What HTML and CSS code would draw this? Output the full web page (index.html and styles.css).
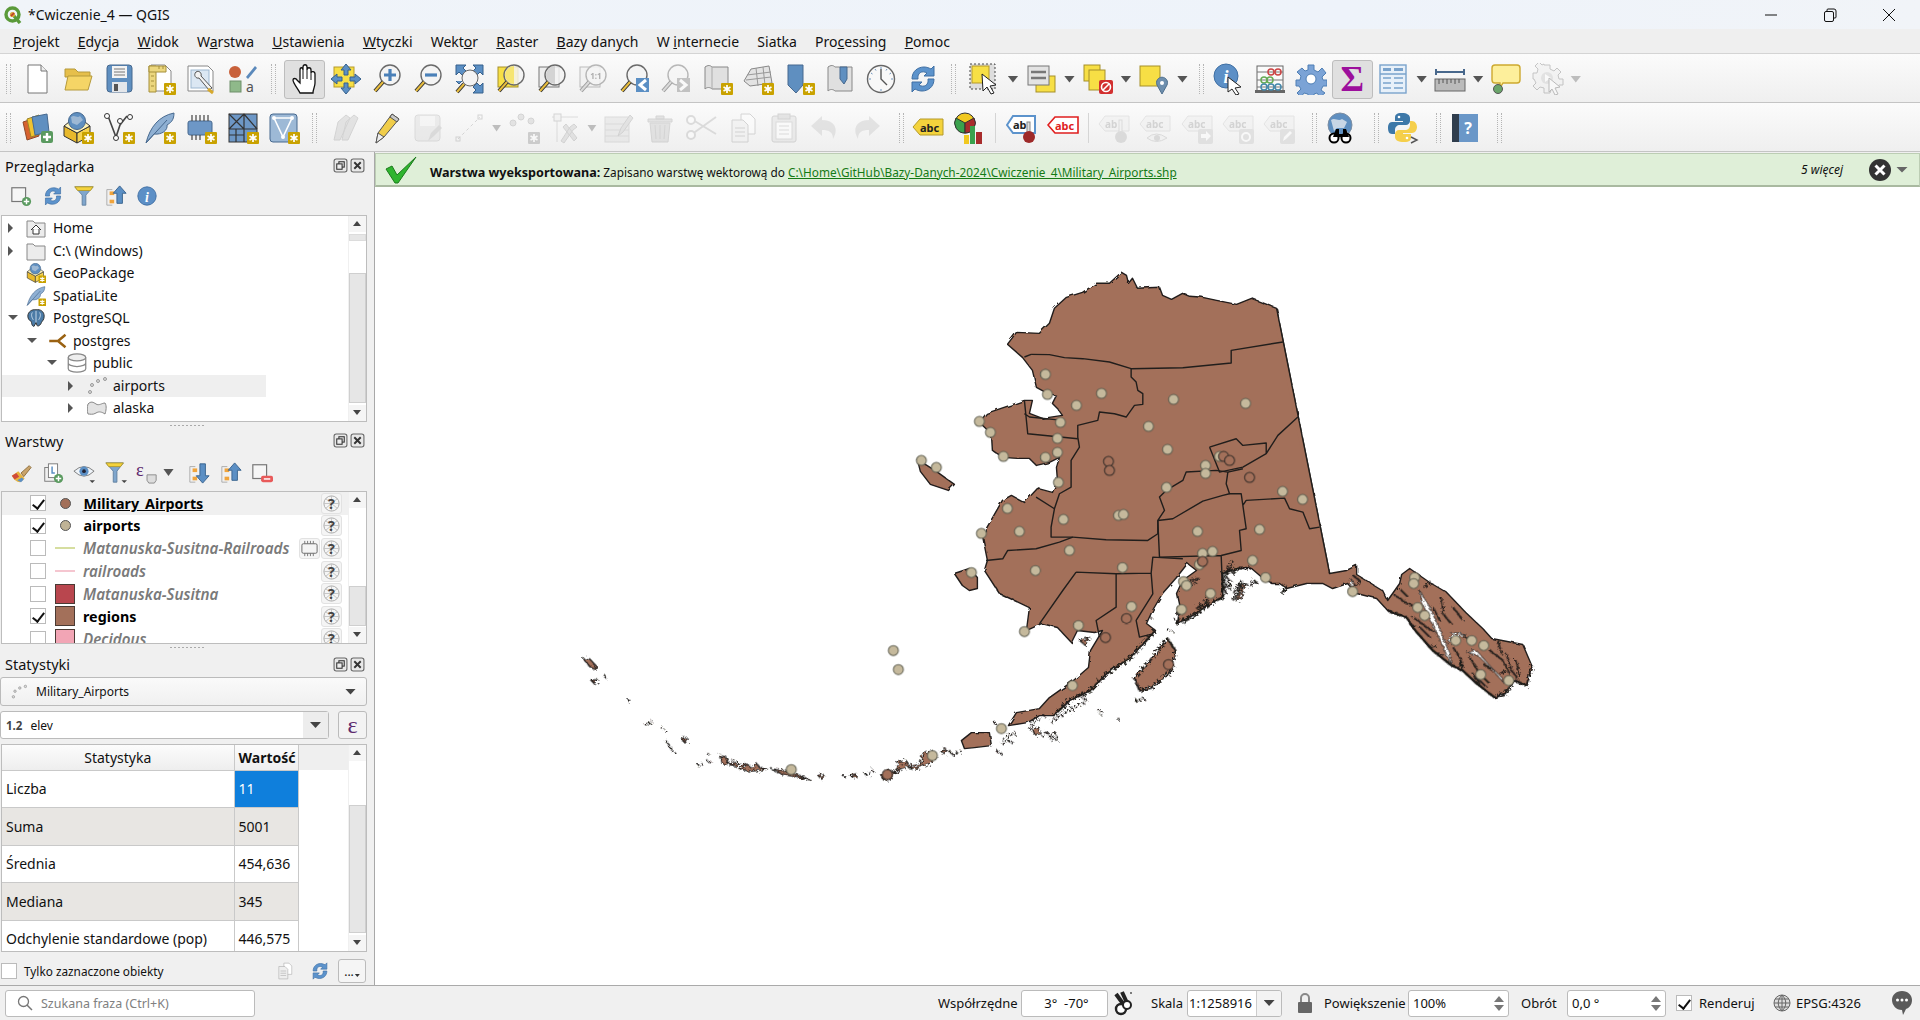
FILE: index.html
```html
<!DOCTYPE html>
<html lang="pl">
<head>
    <meta charset="UTF-8">
    <title>*Cwiczenie_4 — QGIS</title>
    <link rel="stylesheet" href="styles.css">
</head>
<body>
    <svg class="defs" xmlns="http://www.w3.org/2000/svg">
        <!-- shared parts -->
        <g id="star"><rect x="20" y="20" width="12" height="12" rx="1" fill="#c9a200"/><path d="M26 22v8M22.5 24l7 4M22.5 28l7-4" stroke="#fff" stroke-width="1.7"/></g>
        <g id="mag"><circle cx="19" cy="12" r="10" fill="#f3f3f3" fill-opacity=".85" stroke="#6a6a6a" stroke-width="1.4"/><path d="M12 19L4 28" stroke="#333" stroke-width="4"/><path d="M12 19L4 28" stroke="#e8bd3e" stroke-width="2"/></g>

        <!-- toolbar 1 -->
        <symbol id="i-new" viewBox="0 0 32 32"><path d="M7 2h13l6 6v22H7z" fill="#fff" stroke="#777"/><path d="M20 2v6h6" fill="#eee" stroke="#777"/></symbol>
        <symbol id="i-open" viewBox="0 0 32 32"><path d="M3 6h10l3 3h12v5H3z" fill="#e6bf4b" stroke="#b59a3c"/><path d="M3 27l3-14h24l-4 14z" fill="#f5d566" stroke="#b59a3c"/></symbol>
        <symbol id="i-save" viewBox="0 0 32 32"><rect x="4" y="2" width="25" height="27" rx="3" fill="#5f8fc0" stroke="#47698f"/><rect x="9" y="3" width="15" height="12" fill="#f3f3f3"/><path d="M11 6h11M11 9h11M11 12h11" stroke="#777"/><rect x="9" y="19" width="15" height="10" fill="#e3e6ea"/><rect x="11" y="21" width="4" height="7" fill="#555"/></symbol>
        <symbol id="i-layout" viewBox="0 0 32 32"><path d="M7 2h14l6 6v20H7z" fill="#fff" stroke="#888"/><path d="M5 3h7v26H5z" fill="#ecd77e" stroke="#a58f3a"/><path d="M5 3h17v6H5z" fill="#ecd77e" stroke="#a58f3a"/><path d="M7 13h3M7 18h3M7 23h3M15 3v3M19 3v3" stroke="#a58f3a"/><use href="#star"/></symbol>
        <symbol id="i-manager" viewBox="0 0 32 32"><path d="M3 3h20l5 5v20H3z" fill="#fff" stroke="#888"/><rect x="6" y="7" width="18" height="18" fill="#dbe7f3" stroke="#9db7d0"/><path d="M11 9c-3 3 0 7 3 6l10 12 3-2-11-12c1-3-2-6-5-4z" fill="#f2f2f2" stroke="#555"/><path d="M23 26l5 4" stroke="#d6a92e" stroke-width="3"/></symbol>
        <symbol id="i-style" viewBox="0 0 32 32"><circle cx="8" cy="9" r="6" fill="#c8603a"/><path d="M19 14l9-11 2 2-9 11z" fill="#5b89bb"/><rect x="3" y="18" width="11" height="11" fill="#8fb98a" stroke="#6f8f6a"/><text x="19" y="29" class="svg-a">a</text></symbol>
        <symbol id="i-pan" viewBox="0 0 32 32"><path d="M11 30c-2-4-7-10-7-13 0-2 3-2 4 0l3 3V7c0-3 3-3 3 0V4c0-3 4-3 4 0v3c0-3 4-3 4 0v3c0-2 4-2 4 1v9c0 4-2 6-2 10z" fill="#fff" stroke="#111" stroke-width="1.3"/><path d="M14 7v9M18 7v9M22 10v7" stroke="#111"/></symbol>
        <symbol id="i-panmap" viewBox="0 0 32 32"><rect x="4" y="4" width="20" height="20" fill="#f7df45" stroke="#b59a2a"/><path d="M16 1l5 6h-3v5h-4V7h-3zM16 31l5-6h-3v-5h-4v5h-3zM1 16l6-5v3h5v4H7v3zM31 16l-6-5v3h-5v4h5v3z" fill="#5b8fc4" stroke="#36608c"/></symbol>
        <symbol id="i-zoomin" viewBox="0 0 32 32"><use href="#mag"/><path d="M19 6v12M13 12h12" stroke="#4a80b8" stroke-width="3.2"/></symbol>
        <symbol id="i-zoomout" viewBox="0 0 32 32"><use href="#mag"/><path d="M13 12h12" stroke="#4a80b8" stroke-width="3.2"/></symbol>
        <symbol id="i-full" viewBox="0 0 32 32"><path d="M3 2h10l-3 3 3 3-4 4-3-3-3 3zM30 2H20l3 3-3 3 4 4 3-3 3 3zM30 30H20l3-3-3-3 4-4 3 3 3-3zM3 18l3 3 3-3" fill="#5b8fc4" stroke="#36608c"/><circle cx="17" cy="15" r="8" fill="#f3f3f3" fill-opacity=".8" stroke="#666"/><path d="M11 21l-7 8" stroke="#333" stroke-width="4"/><path d="M11 21l-7 8" stroke="#e8bd3e" stroke-width="2"/></symbol>
        <symbol id="i-zsel" viewBox="0 0 32 32"><rect x="3" y="4" width="20" height="20" fill="#f7df45" stroke="#a58f2a"/><use href="#mag"/><path d="M19 3a9 9 0 0 0 0 18z" fill="#f7df45" fill-opacity=".7"/></symbol>
        <symbol id="i-zlayer" viewBox="0 0 32 32"><rect x="3" y="4" width="20" height="20" fill="#eee" stroke="#777"/><use href="#mag"/><path d="M19 3a9 9 0 0 0 0 18z" fill="#ccc" fill-opacity=".8"/></symbol>
        <symbol id="i-z11" viewBox="0 0 32 32"><rect x="3" y="4" width="20" height="20" fill="#eee" stroke="#777"/><use href="#mag"/><text x="19" y="16" class="svg-11">1:1</text></symbol>
        <symbol id="i-zlast" viewBox="0 0 32 32"><use href="#mag"/><rect x="18" y="15" width="13" height="14" fill="#5b8fc4"/><path d="M28 17l-6 5 6 5" fill="none" stroke="#fff" stroke-width="3"/></symbol>
        <symbol id="i-znext" viewBox="0 0 32 32"><use href="#mag"/><rect x="18" y="15" width="13" height="14" fill="#5b8fc4"/><path d="M21 17l6 5-6 5" fill="none" stroke="#fff" stroke-width="3"/></symbol>
        <symbol id="i-mapnew" viewBox="0 0 32 32"><path d="M4 4c3-2 5-2 7 0h16v22H11c-2-2-5-2-7 0z" fill="#e0e0e0" stroke="#888"/><path d="M11 4v22" stroke="#aaa"/><use href="#star"/></symbol>
        <symbol id="i-mapgrid" viewBox="0 0 32 32"><path d="M9 6l18-3 3 17-22 3-6-5z" fill="#e3e3e3" stroke="#888"/><path d="M5 12l24-3M4 17l25-3M14 5l2 18M21 4l2 18" stroke="#999"/><use href="#star"/></symbol>
        <symbol id="i-bookm" viewBox="0 0 32 32"><path d="M5 2h15v20l-7 8-8-8z" fill="#5f8fc0" stroke="#47698f"/><use href="#star"/></symbol>
        <symbol id="i-bookmap" viewBox="0 0 32 32"><path d="M4 4c3-2 5-2 7 0h17v24H11c-2-2-5-2-7 0z" fill="#e0e0e0" stroke="#888"/><path d="M16 4h7v12l-3 5-4-5z" fill="#5f8fc0" stroke="#47698f"/></symbol>
        <symbol id="i-clock" viewBox="0 0 32 32"><circle cx="16" cy="16" r="13.5" fill="#f8f8f8" stroke="#666" stroke-width="1.4"/><path d="M16 6v10l6 6" fill="none" stroke="#555" stroke-width="1.4"/><path d="M16 4v2M16 26v2M4 16h2M26 16h2M10 6l1 1.5M22 6l-1 1.5M6 10l1.5 1M26 10l-1.5 1" stroke="#6d93bd"/></symbol>
        <symbol id="i-refresh" viewBox="0 0 32 32"><path d="M5 16C5 8 11 4 17 4c3 0 5 1 7 2l3-3v10H17l3-3c-5-3-10 0-9 6z" fill="#5c93cc" stroke="#3f6fa3"/><path d="M27 16c0 8-6 12-12 12-3 0-5-1-7-2l-3 3V19h10l-3 3c5 3 10 0 9-6z" fill="#5c93cc" stroke="#3f6fa3"/></symbol>
        <symbol id="i-select" viewBox="0 0 32 32"><rect x="1" y="1" width="25" height="25" fill="#ddd" stroke="#444" stroke-dasharray="2 2"/><rect x="3" y="3" width="17" height="17" fill="#f7df45" stroke="#b59a2a"/><path d="M13 11l14 11-6 1 4 7-3 1-4-7-4 4z" fill="#fff" stroke="#222"/></symbol>
        <symbol id="i-attr" viewBox="0 0 32 32"><rect x="11" y="13" width="19" height="16" fill="#f7df45" stroke="#a58f2a"/><rect x="3" y="3" width="21" height="19" fill="#e3e3e3" stroke="#777"/><path d="M6 9h15M6 15h15" stroke="#777" stroke-width="2.5"/></symbol>
        <symbol id="i-desel" viewBox="0 0 32 32"><rect x="2" y="2" width="16" height="16" fill="#f7df45" stroke="#a58f2a"/><rect x="7" y="7" width="16" height="20" fill="#f7df45" stroke="#a58f2a"/><rect x="17" y="17" width="14" height="14" rx="2" fill="#d22f2f"/><circle cx="24" cy="24" r="4.5" fill="none" stroke="#fff" stroke-width="1.6"/><path d="M21 27l6-6" stroke="#fff" stroke-width="1.6"/></symbol>
        <symbol id="i-loc" viewBox="0 0 32 32"><rect x="2" y="3" width="20" height="20" fill="#f7df45" stroke="#a58f2a"/><path d="M24 31l-5-9a5.5 5.5 0 1 1 10 0z" fill="#6e8fae" stroke="#4e6f8e"/><circle cx="24" cy="20" r="2" fill="#fff"/></symbol>
        <symbol id="i-ident" viewBox="0 0 32 32"><circle cx="13" cy="13" r="12" fill="#5c8fc6" stroke="#3f6fa3"/><text x="13" y="20" class="svg-i">i</text><path d="M15 14l13 10-6 1 4 6-3 1-4-6-4 3z" fill="#fff" stroke="#222"/></symbol>
        <symbol id="i-abacus" viewBox="0 0 32 32"><rect x="3" y="3" width="26" height="25" fill="#fafafa" stroke="#666"/><path d="M3 9h26M3 17h26M3 24h26" stroke="#777"/><rect x="1" y="27" width="30" height="3" fill="#666"/><circle cx="17" cy="9" r="3" fill="none" stroke="#c44" stroke-width="1.5"/><circle cx="24" cy="9" r="3" fill="none" stroke="#c44" stroke-width="1.5"/><circle cx="10" cy="17" r="3" fill="none" stroke="#6a5" stroke-width="1.5"/><circle cx="16" cy="17" r="3" fill="none" stroke="#6a5" stroke-width="1.5"/><circle cx="10" cy="24" r="3" fill="none" stroke="#48a" stroke-width="1.5"/><circle cx="17" cy="24" r="3" fill="none" stroke="#48a" stroke-width="1.5"/><circle cx="24" cy="24" r="3" fill="none" stroke="#48a" stroke-width="1.5"/></symbol>
        <symbol id="i-gear" viewBox="0 0 32 32"><path d="M13 2h6v5l4 2 4-4 4 5-4 4 1 3h4v6h-4l-2 4 4 3-5 4-3-4-3 1v5h-6v-5l-4-1-3 4-4-4 4-4-2-3H1v-6h4l1-4-4-4 5-4 3 3 3-1z" fill="#7ba3d6" stroke="#4f7fb5"/><circle cx="16" cy="16" r="5" fill="#fff" stroke="#4f7fb5"/></symbol>
        <symbol id="i-table" viewBox="0 0 32 32"><rect x="3" y="2" width="26" height="28" fill="#e7f0f9" stroke="#7aa3cc" stroke-width="1.4"/><rect x="6" y="5" width="8" height="3" fill="#7aa3cc"/><rect x="17" y="5" width="9" height="3" fill="#7aa3cc"/><path d="M3 11h26M6 15h8M17 15h9M6 20h8M17 20h9M6 25h8M17 25h9" stroke="#7aa3cc" stroke-width="1.6"/></symbol>
        <symbol id="i-ruler" viewBox="0 0 32 32"><path d="M2 6v6M30 6v6M2 9h28" stroke="#48688c" stroke-width="2"/><rect x="1" y="16" width="30" height="12" fill="#bbb" stroke="#666"/><path d="M5 16v5M9 16v4M13 16v5M17 16v4M21 16v5M25 16v4" stroke="#555"/></symbol>
        <symbol id="i-tip" viewBox="0 0 32 32"><path d="M5 2h22q3 0 3 3v12q0 3-3 3H13l-3 5V20H5q-3 0-3-3V5q0-3 3-3z" fill="#fdef9b" stroke="#cda92f" stroke-width="1.4"/><circle cx="8" cy="26" r="4.5" fill="#6aa56a" stroke="#555"/></symbol>
        <symbol id="i-run" viewBox="0 0 32 32"><path d="M12 2h6v4l4 2 3-3 4 4-3 3 1 4h4v6h-4l-2 3-4-3-3 8h-6v-5l-4-1-3 3-4-4 3-3-2-4H1v-6h4l1-4-3-3 4-4 3 3 2-1z" fill="#eee" stroke="#888"/><circle cx="15" cy="15" r="6" fill="#ccc"/><path d="M13 11l6 4-6 4z" fill="#fff"/><path d="M17 15l11 9-5 1 3 6-3 1-3-6-3 3z" fill="#fff" stroke="#777"/></symbol>

        <!-- toolbar 2 -->
        <symbol id="i-dsm" viewBox="0 0 32 32"><path d="M2 10l12-4 4 18-12 4z" fill="#d7622f" stroke="#8e4a2a"/><path d="M6 7l12-4 4 18-12 4z" fill="#f0c330" stroke="#9a8428"/><path d="M11 5l15-3 2 18-14 3z" fill="#5f8fc0" stroke="#47698f"/><rect x="20" y="19" width="12" height="12" rx="2" fill="#5a9a5f"/><path d="M26 21v8M22 25h8" stroke="#fff" stroke-width="2.4"/></symbol>
        <symbol id="i-geopkg" viewBox="0 0 32 32"><path d="M2 14l13 7v10L2 24z" fill="#e8b92c" stroke="#333"/><path d="M28 14l-13 7v10l13-7z" fill="#f5d24e" stroke="#333"/><path d="M2 14l5-4h16l5 4-13 7z" fill="#fff3b8" stroke="#333"/><circle cx="15" cy="9" r="8.5" fill="#5f8fc0" stroke="#47698f"/><path d="M9 5c4-3 6 2 9-1l3 4-6 5-5-2z" fill="#9db8d4"/><use href="#star"/></symbol>
        <symbol id="i-vnew" viewBox="0 0 32 32"><path d="M5 4l8 21 4-12 7-9" fill="none" stroke="#444" stroke-width="1.6"/><circle cx="4" cy="4" r="2.5" fill="#fff" stroke="#333"/><circle cx="13" cy="26" r="2.5" fill="#fff" stroke="#333"/><circle cx="17" cy="9" r="2.5" fill="#fff" stroke="#333"/><circle cx="27" cy="5" r="2.5" fill="#fff" stroke="#333"/><use href="#star"/></symbol>
        <symbol id="i-feather" viewBox="0 0 32 32"><path d="M2 31C6 15 15 4 30 1c0 8-4 10-7 12 1 5-5 10-13 9z" fill="#8fb0d3" stroke="#47698f"/><path d="M2 31L23 8" stroke="#47698f"/><use href="#star"/></symbol>
        <symbol id="i-chip" viewBox="0 0 32 32"><rect x="3" y="9" width="24" height="14" rx="2" fill="#6d97c6" stroke="#47698f"/><path d="M7 3v6M11 3v6M15 3v6M19 3v6M23 3v6M7 23v5M11 23v5M15 23v5" stroke="#444" stroke-width="1.2"/><use href="#star"/></symbol>
        <symbol id="i-vt" viewBox="0 0 32 32"><rect x="2" y="2" width="28" height="28" fill="#6d97c6" stroke="#333"/><path d="M2 2l15 15M17 2L2 17M17 2v28M2 17h28M17 2l13 15M2 23h15M9 17v13" stroke="#333" stroke-width="1.2"/><use href="#star"/></symbol>
        <symbol id="i-mesh" viewBox="0 0 32 32"><rect x="2" y="2" width="27" height="28" rx="3" fill="#9db9d6" stroke="#47698f"/><path d="M6 6l9 19 9-19z" fill="none" stroke="#fff" stroke-width="1.6"/><circle cx="6" cy="6" r="2" fill="#fff"/><circle cx="24" cy="6" r="2" fill="#fff"/><circle cx="15" cy="25" r="2" fill="#fff"/><use href="#star"/></symbol>
        <symbol id="i-pencils" viewBox="0 0 32 32"><path d="M4 28l4-18 8-7 4 3-10 22zM12 28l4-18 8-7 4 3-10 22z" fill="#ccc" stroke="#aaa"/></symbol>
        <symbol id="i-pencil" viewBox="0 0 32 32"><path d="M5 31l2-10L21 2l7 5-15 18z" fill="#f0cd4a" stroke="#555"/><path d="M21 2l7 5-2 3-7-5z" fill="#c9c9c9" stroke="#555"/><path d="M5 31l2-10 6 4z" fill="#eee" stroke="#555"/></symbol>
        <symbol id="i-saveedit" viewBox="0 0 32 32"><rect x="3" y="3" width="25" height="26" rx="3" fill="#ddd" stroke="#bbb"/><rect x="8" y="4" width="15" height="10" fill="#f3f3f3"/><path d="M16 29l3-8 8-8 3 3-8 8z" fill="#bbb"/></symbol>
        <symbol id="i-digit" viewBox="0 0 32 32"><path d="M5 27L27 5" stroke="#aaa" stroke-dasharray="3 3"/><rect x="3" y="25" width="4" height="4" fill="none" stroke="#aaa"/><rect x="25" y="3" width="4" height="4" fill="none" stroke="#aaa"/></symbol>
        <symbol id="i-points" viewBox="0 0 32 32"><circle cx="5" cy="11" r="3" fill="#ccc" stroke="#aaa"/><circle cx="13" cy="5" r="3" fill="#ccc" stroke="#aaa"/><circle cx="23" cy="9" r="3" fill="#ccc" stroke="#aaa"/><use href="#star"/></symbol>
        <symbol id="i-tools" viewBox="0 0 32 32"><path d="M3 5h26M8 2v28" stroke="#bbb"/><rect x="5" y="2" width="7" height="7" fill="#eee" stroke="#aaa"/><path d="M12 29l9-14 4-3 3 3-4 3-9 13zM17 12l11 14-3 3-11-14z" fill="#ccc" stroke="#aaa"/></symbol>
        <symbol id="i-edittab" viewBox="0 0 32 32"><rect x="2" y="5" width="24" height="25" fill="#ddd" stroke="#bbb"/><path d="M2 12h24M2 18h24M2 24h24" stroke="#bbb"/><path d="M15 24l3-8 9-13 3 3-10 14z" fill="#ccc" stroke="#aaa"/></symbol>
        <symbol id="i-trash" viewBox="0 0 32 32"><path d="M4 7h24v3H4zM12 7V4h8v3zM6 11h20l-2 19H8z" fill="#d5c9c4" stroke="#b9aaa5"/><path d="M11 13l1 14M16 13v14M21 13l-1 14" stroke="#b9aaa5"/></symbol>
        <symbol id="i-cut" viewBox="0 0 32 32"><path d="M3 5l28 17M3 25l28-20" stroke="#bbb" stroke-width="2"/><circle cx="6" cy="8" r="4" fill="#fff" stroke="#bbb" stroke-width="2"/><circle cx="6" cy="23" r="4" fill="#fff" stroke="#bbb" stroke-width="2"/></symbol>
        <symbol id="i-copy" viewBox="0 0 32 32"><path d="M14 2h9l5 5v15H14z" fill="#fff" stroke="#aaa"/><path d="M5 8h11l5 5v17H5z" fill="#eee" stroke="#aaa"/><path d="M8 16h10M8 20h10M8 24h10" stroke="#aaa"/></symbol>
        <symbol id="i-paste" viewBox="0 0 32 32"><rect x="4" y="4" width="24" height="26" rx="2" fill="#ddd" stroke="#aaa"/><rect x="10" y="2" width="12" height="5" fill="#ccc" stroke="#aaa"/><rect x="8" y="10" width="16" height="17" fill="#fff" stroke="#bbb"/><path d="M11 14h10M11 18h10M11 22h10" stroke="#bbb"/></symbol>
        <symbol id="i-undo" viewBox="0 0 32 32"><path d="M13 4L2 14l11 10v-6c7 0 11 2 11 9 6-10 2-19-11-19z" fill="#ccc"/></symbol>
        <symbol id="i-redo" viewBox="0 0 32 32"><path d="M19 4l11 10-11 10v-6c-7 0-11 2-11 9-6-10-2-19 11-19z" fill="#ccc"/></symbol>
        <symbol id="i-abc" viewBox="0 0 32 32"><path d="M1 15l7-8h23v16H8z" fill="#f4d33c" stroke="#b59a2a"/><text x="8" y="20" class="svg-abc">abc</text></symbol>
        <symbol id="i-diagram" viewBox="0 0 32 32"><circle cx="12" cy="11" r="10" fill="#f1c81f" stroke="#333"/><path d="M12 11L3 6a10 10 0 0 0 9 15z" fill="#3aa14d" stroke="#333"/><path d="M12 11l9-5a10 10 0 0 1-9 15z" fill="#a82c2c" stroke="#333"/><rect x="11" y="23" width="5" height="9" fill="#f1c81f"/><rect x="17" y="14" width="5" height="18" fill="#3aa14d"/><rect x="23" y="20" width="6" height="12" fill="#a82c2c"/></symbol>
        <symbol id="i-abpin" viewBox="0 0 32 32"><path d="M1 13l6-9h22v17H7z" fill="#fff" stroke="#5c93cc" stroke-width="2"/><text x="7" y="17" class="svg-abd">ab</text><rect x="21" y="10" width="3" height="12" fill="#ddd" stroke="#888"/><circle cx="23" cy="25" r="6" fill="#9e2a2a"/></symbol>
        <symbol id="i-abcred" viewBox="0 0 32 32"><path d="M1 13l7-8h23v16H8z" fill="#fff" stroke="#e01f1f" stroke-width="1.6"/><text x="8" y="18" class="svg-abr">abc</text></symbol>
        <symbol id="i-abo1" viewBox="0 0 32 32"><path d="M1 12l6-8h24v15H7z" fill="#eee" stroke="#ccc"/><text x="7" y="16" class="svg-abo">ab</text><rect x="21" y="8" width="3" height="14" fill="#eee" stroke="#bbb"/><circle cx="23" cy="25" r="6" fill="#c5bdb8"/></symbol>
        <symbol id="i-abo2" viewBox="0 0 32 32"><path d="M1 12l6-8h24v15H7z" fill="#eee" stroke="#ccc"/><text x="7" y="16" class="svg-abo">abc</text><path d="M8 26q9-8 20 0-11 7-20 0z" fill="#eee" stroke="#bbb"/><circle cx="18" cy="26" r="3" fill="#bbb"/></symbol>
        <symbol id="i-abo3" viewBox="0 0 32 32"><path d="M1 12l6-8h24v15H7z" fill="#eee" stroke="#ccc"/><text x="7" y="16" class="svg-abo">abc</text><rect x="17" y="17" width="15" height="15" rx="2" fill="#d0cbc6"/><path d="M20 22h5v-3l5 5-5 5v-3h-5z" fill="#fff"/></symbol>
        <symbol id="i-abo4" viewBox="0 0 32 32"><path d="M1 12l6-8h24v15H7z" fill="#eee" stroke="#ccc"/><text x="7" y="16" class="svg-abo">abc</text><rect x="17" y="17" width="15" height="15" rx="2" fill="#d0cbc6"/><circle cx="24" cy="25" r="4" fill="none" stroke="#fff" stroke-width="2"/></symbol>
        <symbol id="i-abo5" viewBox="0 0 32 32"><path d="M1 12l6-8h24v15H7z" fill="#eee" stroke="#ccc"/><text x="7" y="16" class="svg-abo">abc</text><rect x="17" y="17" width="15" height="15" rx="2" fill="#d0cbc6"/><path d="M20 29l1-4 6-6 2 2-6 6z" fill="#fff"/></symbol>
        <symbol id="i-search" viewBox="0 0 32 32"><circle cx="15" cy="13" r="12" fill="#5f8fc0" stroke="#7b8ea3"/><path d="M6 8c4-3 7 2 11-1l5 3-3 6-7 0-3 3zM18 20l4-1 2 3-4 1z" fill="#c8d6e5"/><circle cx="9" cy="26" r="4.5" fill="#fff" stroke="#000" stroke-width="2"/><circle cx="21" cy="26" r="4.5" fill="#fff" stroke="#000" stroke-width="2"/><path d="M8 25l3-8h3v5h4v-5h3l3 8" fill="#000"/></symbol>
        <symbol id="i-python" viewBox="0 0 32 32"><path d="M15 1c-6 0-7 2-7 5v3h8v1H5c-3 0-4 3-4 6s1 6 4 6h3v-4c0-3 2-5 5-5h6c2 0 4-2 4-4V6c0-3-3-5-8-5z" fill="#3d78a8"/><path d="M17 30c6 0 7-2 7-5v-3h-8v-1h9c3 0 5-3 5-6s-2-6-5-6h-2v4c0 3-2 5-5 5h-6c-2 0-4 2-4 4v3c0 3 3 5 9 5z" fill="#f5cf4b"/><circle cx="12" cy="5" r="1.3" fill="#fff"/><circle cx="20" cy="26" r="1.3" fill="#fff"/><path d="M24 25l6 3-6 3" fill="none" stroke="#555" stroke-width="1.4"/></symbol>
        <symbol id="i-help" viewBox="0 0 32 32"><rect x="3" y="2" width="26" height="28" fill="#6a97c8"/><rect x="3" y="2" width="7" height="28" fill="#2f3d4d"/><text x="19" y="22" class="svg-q">?</text></symbol>

        <!-- panel buttons -->
        <symbol id="p-add" viewBox="0 0 24 24"><rect x="2" y="3" width="15" height="15" fill="#f6f6f6" stroke="#777" stroke-width="1.3"/><circle cx="18" cy="18" r="5" fill="#5a9a5f"/><path d="M18 15v6M15 18h6" stroke="#fff" stroke-width="1.6"/></symbol>
        <symbol id="p-filter" viewBox="0 0 24 24"><path d="M2 2h20l-8 9v11h-4V11z" fill="#7fa6cd" stroke="#5f7f9f"/><path d="M2 2h20l-3 4H5z" fill="#f4d33c" stroke="#b59a2a"/></symbol>
        <symbol id="p-collapse" viewBox="0 0 24 24"><path d="M2 5h6M2 5v17h6" stroke="#aaa" fill="none"/><rect x="5" y="7" width="5" height="4" fill="#f0a43c"/><rect x="5" y="16" width="5" height="4" fill="#f0a43c"/><path d="M16 1l7 8h-4v11h-6V9H9z" fill="#5b8fc4" stroke="#36608c"/></symbol>
        <symbol id="p-expand" viewBox="0 0 24 24"><path d="M2 5h6M2 5v17h6" stroke="#aaa" fill="none"/><rect x="5" y="7" width="5" height="4" fill="#f0a43c"/><rect x="5" y="16" width="5" height="4" fill="#f0a43c"/><path d="M16 23l7-8h-4V2h-6v13H9z" fill="#5b8fc4" stroke="#36608c"/></symbol>
        <symbol id="p-info" viewBox="0 0 24 24"><circle cx="12" cy="12" r="10" fill="#5c8fc6" stroke="#3f6fa3"/><text x="12" y="18" class="svg-pi">i</text></symbol>
        <symbol id="p-brush" viewBox="0 0 24 24"><path d="M2 15l7-5 7 8-5 4c-4 0-7-3-9-7z" fill="#e8b33c"/><path d="M2 15l5-3 3 4-5 3z" fill="#d04a3a"/><path d="M8 20l5-3 2 2-3 3z" fill="#5b8fc4"/><path d="M12 12l9-8 2 2-8 10z" fill="#c9a36a" stroke="#8c6c3a"/></symbol>
        <symbol id="p-group" viewBox="0 0 24 24"><rect x="3" y="6" width="12" height="15" fill="#f0f0f0" stroke="#777"/><rect x="7" y="2" width="10" height="15" fill="#fff" stroke="#777"/><path d="M11 5v7h3" fill="none" stroke="#5b8fc4" stroke-width="1.6"/><circle cx="18" cy="18" r="5" fill="#5a9a5f"/><path d="M18 15v6M15 18h6" stroke="#fff" stroke-width="1.6"/></symbol>
        <symbol id="p-eye" viewBox="0 0 24 24"><path d="M1 10q11-10 22 0-11 11-22 0z" fill="#eef3f8" stroke="#777"/><circle cx="12" cy="10" r="5" fill="#5b8fc4"/><circle cx="12" cy="10" r="2" fill="#223"/><path d="M18 20h6l-3 3z" fill="#444"/></symbol>
        <symbol id="p-filter2" viewBox="0 0 24 24"><path d="M1 1h19l-7 9v12h-4V10z" fill="#7fa6cd" stroke="#5f7f9f"/><path d="M1 1h19l-3 4H4z" fill="#f4d33c" stroke="#b59a2a"/><path d="M18 20h6l-3 3z" fill="#444"/></symbol>
        <symbol id="p-eps" viewBox="0 0 24 24"><text x="0" y="15" class="svg-eps">ε</text><path d="M12 14h10v6l-2 3h-6l-2-3z" fill="#ddd" stroke="#888"/></symbol>
        <symbol id="p-remove" viewBox="0 0 24 24"><rect x="2" y="3" width="15" height="15" fill="#f6f6f6" stroke="#777" stroke-width="1.3"/><rect x="11" y="15" width="13" height="7" rx="2" fill="#e85a5a"/><path d="M14 18.5h7" stroke="#fff" stroke-width="1.6"/></symbol>
        <symbol id="p-help" viewBox="0 0 20 20"><circle cx="10" cy="10" r="8" fill="none" stroke="#aaa"/><path d="M2 10h16M10 2v16M4 5l12 10M16 5L4 15" stroke="#c4c4c4"/><text x="10" y="16" class="svg-help">?</text></symbol>
        <symbol id="p-mem" viewBox="0 0 20 20"><rect x="2" y="5" width="16" height="10" rx="1.5" fill="#f4f4f4" stroke="#666"/><path d="M5 2v3M8 2v3M11 2v3M14 2v3M5 15v3M8 15v3M11 15v3M14 15v3" stroke="#777"/></symbol>
        <symbol id="p-float" viewBox="0 0 14 14"><rect x="1" y="1" width="12" height="12" rx="2" fill="#e8e8e8" stroke="#666"/><rect x="5.5" y="3.5" width="5" height="5" fill="none" stroke="#333"/><rect x="3.5" y="5.5" width="5" height="5" fill="#eee" stroke="#333"/></symbol>
        <symbol id="p-close" viewBox="0 0 14 14"><rect x="1" y="1" width="12" height="12" rx="2" fill="#e8e8e8" stroke="#666"/><path d="M4 4l6 6M10 4l-6 6" stroke="#333" stroke-width="1.8"/></symbol>
        <symbol id="s-tracker" viewBox="0 0 20 26"><path d="M3 4l8 11M9 2l6 13" stroke="#222" stroke-width="4"/><circle cx="8" cy="19" r="5" fill="#fff" stroke="#222" stroke-width="2.4"/><circle cx="14" cy="15" r="4" fill="#fff" stroke="#222" stroke-width="2"/><circle cx="18" cy="3" r="1" fill="#555"/></symbol>
        <symbol id="s-lock" viewBox="0 0 16 22"><path d="M4 10V6a4 4 0 0 1 8 0v4" fill="none" stroke="#888" stroke-width="2"/><rect x="1" y="10" width="14" height="11" rx="1" fill="#666"/></symbol>
        <symbol id="s-globe" viewBox="0 0 18 18"><circle cx="9" cy="9" r="8" fill="#ddd" stroke="#666"/><path d="M1 9h16M2 5h14M2 13h14M9 1v16M9 1c-5 5-5 11 0 16M9 1c5 5 5 11 0 16" stroke="#666" fill="none"/></symbol>
        <symbol id="s-msg" viewBox="0 0 22 26"><path d="M11 1c6 0 10 4 10 9s-3 8-6 9l-3 6-1-5C5 20 1 15 1 10s4-9 10-9z" fill="#5a5a5a"/><circle cx="6.5" cy="10" r="1.5" fill="#fff"/><circle cx="11" cy="10" r="1.5" fill="#fff"/><circle cx="15.5" cy="10" r="1.5" fill="#fff"/></symbol>
        <symbol id="t-home" viewBox="0 0 20 20"><path d="M1 3h6l2 2h10v14H1z" fill="#ececec" stroke="#888"/><path d="M5 12l5-5 5 5M7 11v5h6v-5" fill="#fff" stroke="#333"/></symbol>
        <symbol id="t-folder" viewBox="0 0 20 20"><path d="M1 3h6l2 2h10v14H1z" fill="#ececec" stroke="#888"/></symbol>
        <symbol id="t-pg" viewBox="0 0 22 22"><path d="M2 9c0-5 5-8 9-7 5-1 9 2 9 7 0 4-2 5-3 7-1 3-4 5-5 3l-1-3-2 4c-2 1-3-3-3-5-2-1-4-3-4-6z" fill="#4b7ba6" stroke="#2a2a2a"/><path d="M11 3v13M7 5c-2 3 0 6 1 8M15 5c2 3 0 6-1 8" stroke="#cfe0ee" fill="none"/></symbol>
        <symbol id="t-conn" viewBox="0 0 16 12"><path d="M1 6h7M14 1L8 6l6 5" fill="none" stroke="#9a6212" stroke-width="2"/></symbol>
        <symbol id="t-db" viewBox="0 0 16 16"><ellipse cx="8" cy="3.5" rx="7" ry="2.8" fill="#eee" stroke="#888"/><path d="M1 3.5v9c0 1.5 3 2.8 7 2.8s7-1.3 7-2.8v-9M1 8c0 1.5 3 2.8 7 2.8s7-1.3 7-2.8" fill="none" stroke="#888"/></symbol>
        <symbol id="t-pts" viewBox="0 0 20 20"><circle cx="3" cy="16" r="1.5" fill="#ddd" stroke="#999"/><circle cx="5" cy="9" r="1.5" fill="#ddd" stroke="#999"/><circle cx="11" cy="5" r="1.5" fill="#ddd" stroke="#999"/><circle cx="18" cy="3" r="1.5" fill="#ddd" stroke="#999"/></symbol>
        <symbol id="t-poly" viewBox="0 0 20 14"><path d="M1 3c3-3 5-2 8 0s6-1 9-1c2 3 1 8 0 11-3-2-6-3-9-1s-6 1-8 1c-1-3-1-7 0-10z" fill="#e3e3e3" stroke="#888"/></symbol>
        <symbol id="qlogo" viewBox="0 0 18 18"><circle cx="8.5" cy="8.5" r="6.5" fill="none" stroke="#5a9a3a" stroke-width="3.4"/><path d="M10 10l6 7" stroke="#5a9a3a" stroke-width="3.4"/><circle cx="8.5" cy="8.5" r="2.6" fill="#d8a23a"/><path d="M7 10l3-3" stroke="#c0392b" stroke-width="1.6"/></symbol>
    </svg>

    <header class="titlebar">
        <svg class="qlogo"><use href="#qlogo"/></svg>
        <span class="title-text">*Cwiczenie_4 — QGIS</span>
        <div class="winbtns">
            <span class="winbtn"><svg width="14" height="14"><path d="M1 7h12" stroke="#111"/></svg></span>
            <span class="winbtn"><svg width="14" height="14"><path d="M4 3V2q0-1 1-1h6q2 0 2 2v6q0 1-1 1h-1" fill="none" stroke="#111"/><rect x="1.5" y="3.5" width="9" height="10" rx="1.5" fill="none" stroke="#111"/></svg></span>
            <span class="winbtn"><svg width="14" height="14"><path d="M1 1l12 12M13 1L1 13" stroke="#111"/></svg></span>
        </div>
    </header>

    <nav class="menubar">
        <span><u>P</u>rojekt</span><span><u>E</u>dycja</span><span><u>W</u>idok</span><span>W<u>a</u>rstwa</span><span><u>U</u>stawienia</span><span><u>W</u>tyczki</span><span>Wekt<u>o</u>r</span><span><u>R</u>aster</span><span><u>B</u>azy danych</span><span>W <u>i</u>nternecie</span><span>Siatka</span><span>Pro<u>c</u>essing</span><span><u>P</u>omoc</span>
    </nav>

    <div class="toolbar">
        <i class="grip g-first"></i>
        <span class="tb"><svg class="ic"><use href="#i-new"/></svg></span>
        <span class="tb"><svg class="ic"><use href="#i-open"/></svg></span>
        <span class="tb"><svg class="ic"><use href="#i-save"/></svg></span>
        <span class="tb"><svg class="ic"><use href="#i-layout"/></svg></span>
        <span class="tb"><svg class="ic"><use href="#i-manager"/></svg></span>
        <span class="tb"><svg class="ic"><use href="#i-style"/></svg></span>
        <i class="grip g-nav"></i>
        <span class="tb active"><svg class="ic"><use href="#i-pan"/></svg></span>
        <span class="tb"><svg class="ic"><use href="#i-panmap"/></svg></span>
        <span class="tb"><svg class="ic"><use href="#i-zoomin"/></svg></span>
        <span class="tb"><svg class="ic"><use href="#i-zoomout"/></svg></span>
        <span class="tb"><svg class="ic"><use href="#i-full"/></svg></span>
        <span class="tb"><svg class="ic"><use href="#i-zsel"/></svg></span>
        <span class="tb"><svg class="ic"><use href="#i-zlayer"/></svg></span>
        <span class="tb off"><svg class="ic"><use href="#i-z11"/></svg></span>
        <span class="tb"><svg class="ic"><use href="#i-zlast"/></svg></span>
        <span class="tb off"><svg class="ic"><use href="#i-znext"/></svg></span>
        <span class="tb"><svg class="ic"><use href="#i-mapnew"/></svg></span>
        <span class="tb"><svg class="ic"><use href="#i-mapgrid"/></svg></span>
        <span class="tb"><svg class="ic"><use href="#i-bookm"/></svg></span>
        <span class="tb"><svg class="ic"><use href="#i-bookmap"/></svg></span>
        <span class="tb"><svg class="ic"><use href="#i-clock"/></svg></span>
        <span class="tb"><svg class="ic"><use href="#i-refresh"/></svg></span>
        <i class="grip g-nav"></i>
        <span class="tb"><svg class="ic"><use href="#i-select"/></svg></span><b class="dd"></b>
        <span class="tb"><svg class="ic"><use href="#i-attr"/></svg></span><b class="dd"></b>
        <span class="tb"><svg class="ic"><use href="#i-desel"/></svg></span><b class="dd"></b>
        <span class="tb"><svg class="ic"><use href="#i-loc"/></svg></span><b class="dd"></b>
        <i class="grip g-id"></i>
        <span class="tb"><svg class="ic"><use href="#i-ident"/></svg></span>
        <span class="tb"><svg class="ic"><use href="#i-abacus"/></svg></span>
        <span class="tb"><svg class="ic"><use href="#i-gear"/></svg></span>
        <span class="tb active"><span class="sigma">Σ</span></span>
        <span class="tb"><svg class="ic"><use href="#i-table"/></svg></span><b class="dd"></b>
        <span class="tb"><svg class="ic"><use href="#i-ruler"/></svg></span><b class="dd"></b>
        <span class="tb"><svg class="ic"><use href="#i-tip"/></svg></span>
        <span class="tb off"><svg class="ic"><use href="#i-run"/></svg></span><b class="dd dd-off"></b>
    </div>

    <div class="toolbar">
        <i class="grip g-first"></i>
        <span class="tb"><svg class="ic"><use href="#i-dsm"/></svg></span>
        <span class="tb"><svg class="ic"><use href="#i-geopkg"/></svg></span>
        <span class="tb"><svg class="ic"><use href="#i-vnew"/></svg></span>
        <span class="tb"><svg class="ic"><use href="#i-feather"/></svg></span>
        <span class="tb"><svg class="ic"><use href="#i-chip"/></svg></span>
        <span class="tb"><svg class="ic"><use href="#i-vt"/></svg></span>
        <span class="tb"><svg class="ic"><use href="#i-mesh"/></svg></span>
        <i class="grip g-edit"></i>
        <span class="tb off"><svg class="ic"><use href="#i-pencils"/></svg></span>
        <span class="tb"><svg class="ic"><use href="#i-pencil"/></svg></span>
        <span class="tb off"><svg class="ic"><use href="#i-saveedit"/></svg></span>
        <span class="tb off"><svg class="ic"><use href="#i-digit"/></svg></span><b class="dd dd-narrow dd-off"></b>
        <span class="tb off"><svg class="ic"><use href="#i-points"/></svg></span>
        <span class="tb off"><svg class="ic"><use href="#i-tools"/></svg></span><b class="dd dd-narrow dd-off"></b>
        <span class="tb off"><svg class="ic"><use href="#i-edittab"/></svg></span>
        <span class="tb off"><svg class="ic"><use href="#i-trash"/></svg></span>
        <span class="tb off"><svg class="ic"><use href="#i-cut"/></svg></span>
        <span class="tb off"><svg class="ic"><use href="#i-copy"/></svg></span>
        <span class="tb off"><svg class="ic"><use href="#i-paste"/></svg></span>
        <span class="tb off"><svg class="ic"><use href="#i-undo"/></svg></span>
        <span class="tb off"><svg class="ic"><use href="#i-redo"/></svg></span>
        <i class="grip g-label"></i>
        <span class="tb"><svg class="ic"><use href="#i-abc"/></svg></span>
        <span class="tb"><svg class="ic"><use href="#i-diagram"/></svg></span>
        <i class="vsep vsep-a"></i>
        <span class="tb"><svg class="ic"><use href="#i-abpin"/></svg></span>
        <span class="tb"><svg class="ic"><use href="#i-abcred"/></svg></span>
        <i class="vsep vsep-b"></i>
        <span class="tb off"><svg class="ic"><use href="#i-abo1"/></svg></span>
        <span class="tb off"><svg class="ic"><use href="#i-abo2"/></svg></span>
        <span class="tb off"><svg class="ic"><use href="#i-abo3"/></svg></span>
        <span class="tb off"><svg class="ic"><use href="#i-abo4"/></svg></span>
        <span class="tb off"><svg class="ic"><use href="#i-abo5"/></svg></span>
        <i class="grip g-small"></i>
        <span class="tb"><svg class="ic"><use href="#i-search"/></svg></span>
        <i class="grip g-small"></i>
        <span class="tb"><svg class="ic"><use href="#i-python"/></svg></span>
        <i class="grip g-small"></i>
        <span class="tb"><svg class="ic"><use href="#i-help"/></svg></span>
        <i class="grip g-small"></i>
    </div>

    <div class="main">
        <aside class="dock">
            <!-- Browser panel -->
            <section class="panel panel-browser">
                <div class="panel-head">
                    <span>Przeglądarka</span>
                    <svg class="pbtn"><use href="#p-float"/></svg><svg class="pbtn"><use href="#p-close"/></svg>
                </div>
                <div class="panel-tools">
                    <svg class="pic"><use href="#p-add"/></svg>
                    <svg class="pic"><use href="#i-refresh"/></svg>
                    <svg class="pic"><use href="#p-filter"/></svg>
                    <svg class="pic"><use href="#p-collapse"/></svg>
                    <svg class="pic"><use href="#p-info"/></svg>
                </div>
                <div class="box tree-box">
                    <div class="tree">
                        <div class="row"><i class="arr-r l0"></i><svg class="t-ic l0i"><use href="#t-home"/></svg><span>Home</span></div>
                        <div class="row"><i class="arr-r l0"></i><svg class="t-ic l0i"><use href="#t-folder"/></svg><span>C:\ (Windows)</span></div>
                        <div class="row"><svg class="t-ic l0i"><use href="#i-geopkg"/></svg><span>GeoPackage</span></div>
                        <div class="row"><svg class="t-ic l0i"><use href="#i-feather"/></svg><span>SpatiaLite</span></div>
                        <div class="row"><i class="arr-d l0"></i><svg class="t-ic l0i"><use href="#t-pg"/></svg><span>PostgreSQL</span></div>
                        <div class="row"><i class="arr-d l1"></i><svg class="t-ic l1i"><use href="#t-conn"/></svg><span>postgres</span></div>
                        <div class="row"><i class="arr-d l2"></i><svg class="t-ic l2i"><use href="#t-db"/></svg><span>public</span></div>
                        <div class="row selected"><i class="arr-r l3"></i><svg class="t-ic l3i"><use href="#t-pts"/></svg><span>airports</span></div>
                        <div class="row"><i class="arr-r l3"></i><svg class="t-ic l3i"><use href="#t-poly"/></svg><span>alaska</span></div>
                    </div>
                    <div class="sb sb-browser"><b class="sb-up"></b><i class="sb-nub"></i><i class="thumb"></i><b class="sb-down"></b></div>
                </div>
                <div class="handle"></div>
            </section>

            <!-- Layers panel -->
            <section class="panel panel-layers">
                <div class="panel-head">
                    <span>Warstwy</span>
                    <svg class="pbtn"><use href="#p-float"/></svg><svg class="pbtn"><use href="#p-close"/></svg>
                </div>
                <div class="panel-tools tools-layers">
                    <svg class="pic"><use href="#p-brush"/></svg>
                    <svg class="pic"><use href="#p-group"/></svg>
                    <svg class="pic"><use href="#p-eye"/></svg>
                    <svg class="pic"><use href="#p-filter2"/></svg>
                    <svg class="pic"><use href="#p-eps"/></svg><b class="dd dd-panel"></b>
                    <svg class="pic"><use href="#p-expand"/></svg>
                    <svg class="pic"><use href="#p-collapse"/></svg>
                    <svg class="pic"><use href="#p-remove"/></svg>
                </div>
                <div class="box layers-box">
                    <div class="layers">
                        <div class="lrow current"><i class="ck on"></i><i class="sym dot brown"></i><span class="lname on active-layer">Military_Airports</span><svg class="hbtn"><use href="#p-help"/></svg></div>
                        <div class="lrow"><i class="ck on"></i><i class="sym dot tan"></i><span class="lname on">airports</span><svg class="hbtn"><use href="#p-help"/></svg></div>
                        <div class="lrow"><i class="ck"></i><i class="sym ln green"></i><span class="lname">Matanuska-Susitna-Railroads</span><svg class="hbtn mem"><use href="#p-mem"/></svg><svg class="hbtn after-mem"><use href="#p-help"/></svg></div>
                        <div class="lrow"><i class="ck"></i><i class="sym ln pink"></i><span class="lname">railroads</span><svg class="hbtn"><use href="#p-help"/></svg></div>
                        <div class="lrow"><i class="ck"></i><i class="sym sq red"></i><span class="lname">Matanuska-Susitna</span><svg class="hbtn"><use href="#p-help"/></svg></div>
                        <div class="lrow"><i class="ck on"></i><i class="sym sq brownsq"></i><span class="lname on">regions</span><svg class="hbtn"><use href="#p-help"/></svg></div>
                        <div class="lrow"><i class="ck"></i><i class="sym sq pinksq"></i><span class="lname">Decidous</span><svg class="hbtn"><use href="#p-help"/></svg></div>
                    </div>
                    <div class="sb sb-layers"><b class="sb-up"></b><i class="thumb"></i><b class="sb-down"></b></div>
                </div>
                <div class="handle"></div>
            </section>

            <!-- Statistics panel -->
            <section class="panel panel-stats">
                <div class="panel-head">
                    <span>Statystyki</span>
                    <svg class="pbtn"><use href="#p-float"/></svg><svg class="pbtn"><use href="#p-close"/></svg>
                </div>
                <div class="combo combo-layer">
                    <svg class="c-ic"><use href="#t-pts"/></svg><span>Military_Airports</span><b class="dd dd-combo"></b>
                </div>
                <div class="field-row">
                    <div class="combo combo-field">
                        <span class="num-tag">1.2</span><span>elev</span><span class="combo-arrow"><b class="dd dd-combo"></b></span>
                    </div>
                    <span class="eps-btn">ε</span>
                </div>
                <div class="box stats-box">
                    <div class="stats-wrap">
                        <table class="stats">
                            <tr><th class="col-a">Statystyka</th><th class="col-b">Wartość</th></tr>
                            <tr><td>Liczba</td><td class="picked">11</td></tr>
                            <tr class="alt"><td>Suma</td><td>5001</td></tr>
                            <tr><td>Średnia</td><td>454,636</td></tr>
                            <tr class="alt"><td>Mediana</td><td>345</td></tr>
                            <tr><td>Odchylenie standardowe (pop)</td><td>446,575</td></tr>
                        </table>
                    </div>
                    <div class="sb sb-stats"><b class="sb-up"></b><i class="thumb"></i><b class="sb-down"></b></div>
                </div>
                <div class="selected-row">
                    <i class="ck ck-stats"></i><span class="sel-label">Tylko zaznaczone obiekty</span>
                    <svg class="pic copy-ic"><use href="#i-copy"/></svg>
                    <svg class="pic refresh-ic"><use href="#i-refresh"/></svg>
                    <span class="more-btn">...<b class="dd dd-more"></b></span>
                </div>
            </section>
        </aside>

        <main class="canvas">
            <div class="msgbar">
                <svg class="msg-ok" viewBox="0 0 32 28"><path d="M1 13l6-3 5 9L31 1 13 27h-3z" fill="#2fb52f" stroke="#1c7a1c"/></svg>
                <span class="msg-text"><b>Warstwa wyeksportowana:</b> Zapisano warstwę wektorową do <a href="#">C:\Home\GitHub\Bazy-Danych-2024\Cwiczenie_4\Military_Airports.shp</a></span>
                <em class="msg-more">5 więcej</em>
                <svg class="msg-close" viewBox="0 0 22 22"><circle cx="11" cy="11" r="11" fill="#333"/><path d="M6.5 6.5l9 9M15.5 6.5l-9 9" stroke="#fff" stroke-width="3"/></svg>
                <b class="dd dd-msg"></b>
            </div>

            <svg class="map" viewBox="376 187 1544 797">
                <defs>
                    <filter id="soft" x="-5%" y="-5%" width="110%" height="110%">
                        <feTurbulence type="fractalNoise" baseFrequency=".12" numOctaves="2" seed="4"/>
                        <feDisplacementMap in="SourceGraphic" scale="3"/>
                    </filter>
                    <filter id="rough" x="-5%" y="-5%" width="110%" height="110%">
                        <feTurbulence type="fractalNoise" baseFrequency=".35" numOctaves="2" seed="9"/>
                        <feDisplacementMap in="SourceGraphic" scale="7"/>
                    </filter>
                </defs>

                <!-- mainland with the panhandle, in page pixels -->
                <g filter="url(#soft)">
                    <path class="land" d="M1008 344L1017 332 1040 333 1050 323 1055 308 1067 297 1083 292 1097 283 1110 283 1122 272 1127 275 1129 283 1133 278 1138 288 1160 287 1163 295 1172 299 1183 293 1190 296 1203 297 1217 300 1237 304 1252 298 1277 308 1330 573 1347 570 1357 565 1357 574 1383 590 1388 600 1400 583 1402 574 1410 568 1430 582 1447 592 1467 613 1483 628 1492 638 1523 644 1532 665 1527 685 1515 680 1505 693 1495 697 1477 683 1463 670 1452 665 1433 650 1413 627 1407 617 1388 610 1377 598 1357 593 1348 583 1333 588 1323 583 1307 583 1287 588 1280 583 1272 583 1266 580 1252 568 1237 568 1223 573 1223 597 1210 603 1197 613 1177 623 1180 607 1177 593 1183 580 1197 570 1188 563 1177 577 1163 593 1153 610 1147 623 1156 630 1131 657 1107 673 1091 690 1070 700 1054 715 1040 715 1028 722 1009 725 1017 712 1040 708 1050 697 1074 680 1089 667 1091 650 1103 630 1095 632 1078 630 1072 642 1058 627 1042 623 1027 630 1030 607 1000 593 985 570 988 560 983 535 1003 500 1012 495 1025 502 1038 488 1053 492 1058 480 1057 467 1060 457 1050 462 1037 465 1030 458 1018 458 1003 457 993 450 992 433 980 422 987 413 1025 400 1033 400 1030 413 1043 418 1063 415 1058 408 1053 403 1057 395 1048 393 1037 387 1033 370 1023 357z"/>
                    <!-- islands that stay smooth -->
                    <path class="land" d="M955 573L970 568 978 577 978 588 970 590 963 585zM918 459L937 471 955 484 949 490 931 484 921 471zM962 740L972 732 990 732 992 745 975 747 965 748z"/>
                </g>
                <!-- straight eastern border -->
                <path class="east-clear" d="M1279.5 300L1333 570"/>
                <path class="east-fill" d="M1275 310L1328 572"/>
                <path class="border" d="M1277 308L1330 573"/>

                <!-- region borders, coordinates of the 3x crop -->
                <g transform="translate(950 260) scale(.3333)">
                    <path class="border" d="M245 282L300 283 345 292 400 295 480 305 545 325 700 322 845 308 845 270 1000 245"/>
                    <path class="border" d="M245 282L225 290M545 325L545 350 560 365 565 390 580 400 580 432 555 435 530 470 495 460 450 455 445 480 385 495 385 530 390 560 365 600 365 680 330 700 315 745 305 800 305 830 370 830 470 838 595 840 625 820 625 780 645 750 630 710 650 690 700 660 710 635 800 630 835 635 830 670 840 700 820 705 760 722 670 775 625 780"/>
                    <path class="border" d="M225 420L235 520 385 535M225 460L240 470 340 480M315 745L260 710"/>
                    <path class="border" d="M780 560L860 535 880 555 950 548 950 580 880 620 810 635 780 560 M950 580L985 525 1045 470 M835 635L880 625"/>
                    <path class="border" d="M840 700L875 700 885 770 890 805 870 810 875 870 815 885 630 890 625 780M880 735L890 720 1005 713 1020 745 1060 755 1080 805 1110 800M815 885L820 1010"/>
                    <path class="border" d="M110 900L160 895 175 870 260 865 330 845 370 830M380 935L500 940 605 938 610 890 700 895M380 935L340 990 270 1090M500 940L500 1040 440 1080 450 1130M605 938L610 1000 560 1080 570 1130 610 1120"/>
                </g>

                <!-- rough shores: fjords, skerries and the smaller islands -->
                <g filter="url(#rough)">
                    <path class="land" d="M1135 677L1148 663 1168 638 1176 650 1172 670 1152 687 1140 690zM1190 580L1199 578 1192 586zM1080 640L1090 637 1085 644zM1236 600l7-15 4-2-7 15z"/>
                    <path class="shore" d="M1388 610L1407 617 1413 627 1433 650 1452 665 1463 670 1477 683 1495 697 1505 693 1515 680 1527 685 1532 665M1223 573L1223 597 1210 603 1197 613 1177 623 1180 607M1156 630L1131 657 1107 673 1091 690 1070 700 1054 715M1135 677L1148 663 1168 638 1176 650 1172 670 1152 687 1140 690zM1252 568L1237 568 1223 573"/>

                    <g transform="translate(950 260) scale(.3333)">
                        <path class="jag" d="M820 940l8 30-6 12 10 20M835 915l-6 32 8 10 5 30M860 990l18-26-8 4-18 30M900 975l22-10-10-6M1000 1000l8-20-8 8M760 1020l14-6-10 22 14-12M740 1045l16-12-8 24M700 1085l20-10"/>
                    </g>
                    <g transform="translate(1200 420) scale(.3333)">
                        <path class="gap" d="M660 510L690 560 720 625 750 700 755 735 735 690 700 615 668 550zM755 640L800 640 775 650 745 670zM800 695L830 690 870 735 905 770 915 790 880 750 835 705zM455 475L465 500 450 495z"/>
                        <path class="jag" d="M585 525l15 8 15 12 25 10M600 505l12 12 13 13M640 590l20 14 20 16 25 15M630 610l20 10M660 620l15 15 15 15M680 670l15 15 15 15 25 5M690 680l20-5M725 530l3 25 2 25 25 30M760 560l15 20 15 20M700 560l10 20 10 20M790 650l20 5 20 5M760 680l10 15 10 15 10 30M810 710l15 25 15 25 30 30M830 770l15 15 15 15M870 690l20 15 20 15 20 40M920 700l8 25 7 25 20 25M950 720l5 25 5 25M895 660l5 20 5 20M670 500l25-15M460 465l20 15-15 20M850 730l30 20M780 720l8 30M820 760l25 40M900 760l20-10"/>
                        <path class="jag" d="M245 520l15-25M100 420l-12 30M115 440l-20 20M75 510l20-30M130 490l-30 50"/>
                    </g>
                    <g transform="translate(560 600) scale(.408 .3333)">
                        <path class="land" d="M60 175L75 175 90 195 90 205 75 198zM78 238L95 238 85 248zM890 460L915 452 925 470 905 490 870 505 855 500 885 490zM790 525L805 508 820 515 830 500 830 485 850 480 855 495 835 505 820 520 810 535 795 538zM520 505L550 510 580 520 615 538 585 530 545 520zM440 505L455 490 470 500 485 490 490 500 510 505 470 512zM395 465L410 470 415 490 400 490zM410 490L440 485 435 497zM940 445L950 448 945 458 935 455zM635 525L645 520 650 528 640 532zM716 522L728 520 726 530 716 530zM303 412L313 412 313 423 303 423zM1160 385L1175 380 1178 400 1165 403z"/>
                        <path class="speck" d="M110 224l6 10M172 298v8M210 372l12-4 8-8M250 380l5 6M262 390v6M262 420l8 16 12 22M365 458v6M340 498l12-8M360 478l12 8M425 478l4 2M695 528l8-5M750 522l10 0 8-16M955 450l8 10 18-4 8-6M1070 365l-4 6M1070 450l15 10M1085 430l15-25 20-8M1100 420l12 8M1185 410l10-18 8 20 12-14 6 18-18 4M1205 365l20-18 40-28 30-25M1280 290l10 5M1285 310l3 3M1325 325v15M1370 352v8M1490 90h12M1450 50v4M1410 300l28-6M1150 385l15-25 25-15"/>
                    </g>
                </g>

                <!-- airports layer -->
                <g class="airports">
                    <circle cx="1046" cy="374"/><circle cx="1048" cy="394"/><circle cx="1077" cy="405"/><circle cx="1102" cy="393"/><circle cx="1061" cy="422"/><circle cx="1058" cy="438"/><circle cx="1058" cy="452"/><circle cx="1046" cy="457"/><circle cx="1004" cy="456"/><circle cx="991" cy="432"/><circle cx="980" cy="421"/><circle cx="1059" cy="482"/><circle cx="1008" cy="508"/><circle cx="1064" cy="519"/><circle cx="1119" cy="515"/><circle cx="1124" cy="514"/><circle cx="1149" cy="426"/><circle cx="1174" cy="399"/><circle cx="1246" cy="403"/><circle cx="1168" cy="449"/><circle cx="1206" cy="465"/><circle cx="1206" cy="473"/><circle cx="1167" cy="487"/><circle cx="1220" cy="456"/><circle cx="1198" cy="531"/><circle cx="1203" cy="553"/><circle cx="1213" cy="551"/><circle cx="1200" cy="564"/><circle cx="1253" cy="560"/><circle cx="1266" cy="577"/><circle cx="1260" cy="529"/><circle cx="1283" cy="491"/><circle cx="1303" cy="499"/><circle cx="982" cy="533"/><circle cx="1020" cy="531"/><circle cx="1070" cy="550"/><circle cx="1036" cy="570"/><circle cx="1123" cy="567"/><circle cx="972" cy="572"/><circle cx="1184" cy="581"/><circle cx="1187" cy="585"/><circle cx="1211" cy="593"/><circle cx="1182" cy="609"/><circle cx="1132" cy="606"/><circle cx="1079" cy="625"/><circle cx="1025" cy="631"/>
                    <circle cx="1353" cy="591"/><circle cx="1415" cy="577"/><circle cx="1414" cy="583"/><circle cx="1418" cy="607"/><circle cx="1425" cy="615"/><circle cx="1456" cy="640"/><circle cx="1472" cy="640"/><circle cx="1484" cy="645"/><circle cx="1481" cy="674"/><circle cx="1509" cy="680"/>
                    <circle cx="894" cy="650"/><circle cx="899" cy="669"/><circle cx="1073" cy="685"/><circle cx="1002" cy="728"/><circle cx="933" cy="755"/><circle cx="792" cy="769"/><circle cx="922" cy="460"/><circle cx="937" cy="467"/>
                </g>
                <!-- Military_Airports layer -->
                <g class="military">
                    <circle cx="1109" cy="461"/><circle cx="1110" cy="470"/><circle cx="1224" cy="456"/><circle cx="1230" cy="460"/><circle cx="1250" cy="477"/><circle cx="1203" cy="561"/><circle cx="1127" cy="618"/><circle cx="1106" cy="637"/><circle cx="1169" cy="664"/><circle cx="888" cy="774"/>
                </g>
            </svg>
        </main>
    </div>

    <footer class="statusbar">
        <div class="searchbox">
            <svg class="search-ic" viewBox="0 0 16 16"><circle cx="6.5" cy="6.5" r="5" fill="none" stroke="#777" stroke-width="1.3"/><path d="M10 10l5 5" stroke="#777" stroke-width="1.5"/></svg>
            <span>Szukana fraza (Ctrl+K)</span>
        </div>
        <span class="st st-coordl">Współrzędne</span>
        <span class="st-input st-coord">3°&nbsp; -70°</span>
        <svg class="st-ic st-track"><use href="#s-tracker"/></svg>
        <span class="st st-scalel">Skala</span>
        <span class="st-input st-scale"><span class="scale-val">1:1258916</span><span class="scale-dd"><b class="dd dd-combo"></b></span></span>
        <svg class="st-ic st-lock"><use href="#s-lock"/></svg>
        <span class="st st-magl">Powiększenie</span>
        <span class="st-input st-mag">100%<span class="spin"><b></b><b></b></span></span>
        <span class="st st-rotl">Obrót</span>
        <span class="st-input st-rot">0,0 °<span class="spin"><b></b><b></b></span></span>
        <i class="ck on st-ck"></i>
        <span class="st st-render">Renderuj</span>
        <svg class="st-ic st-globe"><use href="#s-globe"/></svg>
        <span class="st st-epsg">EPSG:4326</span>
        <svg class="st-ic st-msg"><use href="#s-msg"/></svg>
    </footer>
</body>
</html>
```

FILE: styles.css
```css
* {
    margin: 0;
    padding: 0;
    box-sizing: border-box;
}

html, body {
    height: 100%;
    overflow: hidden;
}

body {
    display: flex;
    flex-direction: column;
    background: #f0f0f0;
    color: #111;
    font-family: "Noto Sans", "Open Sans", sans-serif;
    font-size: 13.5px;
}

.defs {
    display: none;
}

i, b.dd {
    display: block;
    flex: none;
}

/* title and menu */
.titlebar {
    display: flex;
    align-items: center;
    height: 29px;
    background: linear-gradient(90deg, #f0f4f9, #eef3fa 70%, #f1f4f8);
    flex: none;
}

.qlogo {
    width: 18px;
    height: 18px;
    margin-left: 4px;
}

.title-text {
    margin-left: 6px;
    font-size: 14px;
}

.winbtns {
    display: flex;
    margin-left: auto;
    margin-right: 2px;
}

.winbtn {
    display: flex;
    align-items: center;
    justify-content: center;
    width: 59px;
}

.menubar {
    display: flex;
    align-items: center;
    gap: 18.2px;
    height: 25px;
    padding-left: 13px;
    background: #efefef;
    border-bottom: 1px solid #d4d4d4;
    font-size: 14px;
    flex: none;
}

/* toolbars */
.toolbar {
    display: flex;
    align-items: center;
    height: 49px;
    padding-top: 2px;
    background: linear-gradient(#fbfbfb, #efefef);
    border-bottom: 1px solid #c4c4c4;
    flex: none;
}

.tb {
    display: flex;
    align-items: center;
    justify-content: center;
    width: 41.2px;
    height: 39px;
    flex: none;
}

.tb.active {
    background: #e0e0e0;
    border: 1px solid #bdbdbd;
    border-radius: 3px;
}

.off {
    opacity: .45;
    filter: grayscale(1);
}

.ic {
    width: 32px;
    height: 32px;
}

.sigma {
    font-family: "Liberation Serif", serif;
    font-size: 36px;
    line-height: 1;
    color: #9c0f9c;
    font-weight: bold;
}

.grip {
    height: 30px;
    width: 5px;
    border-left: 1px dotted #b5b5b5;
    border-right: 1px dotted #b5b5b5;
}

.g-first { margin: 0 5px 0 6px; }
.g-nav { margin: 0 8px 0 8px; }
.g-id { margin: 0 4px 0 9px; }
.g-edit { margin: 0 8px 0 8px; }
.g-label { margin: 0 3px 0 12.5px; }
.g-small { margin: 0 3.8px 0 12px; }

.vsep {
    width: 1px;
    height: 30px;
    background: #d5d5d5;
}

.vsep-a { margin: 0 5.5px; }
.vsep-b { margin: 0 4.3px; }

.dd {
    width: 15.3px;
    height: 7px;
    background: #555;
    clip-path: polygon(14% 0, 86% 0, 50% 100%);
}

.dd-off { opacity: .35; }
.dd-narrow { width: 13px; }
.dd-panel { width: 14px; margin: 0 3px 0 -6px; }
.dd-combo { width: 11px; height: 6px; background: #444; clip-path: polygon(0 0, 100% 0, 50% 100%); }
.dd-msg { width: 12px; height: 6px; margin-left: 5px; background: #666; clip-path: polygon(0 0, 100% 0, 50% 100%); }
.dd-more { width: 5px; height: 3px; margin-left: 1px; margin-bottom: 1px; background: #333; clip-path: polygon(0 0, 100% 0, 50% 100%); }

/* main area */
.main {
    display: flex;
    flex: 1;
    min-height: 0;
}

.dock {
    display: flex;
    flex-direction: column;
    width: 375px;
    flex: none;
    border-right: 1px solid #a8a8a8;
}

.panel-browser { height: 275px; }
.panel-layers { height: 225px; }
.panel-stats { flex: 1; }

.panel-head {
    display: flex;
    align-items: center;
    gap: 2px;
    height: 27px;
    padding: 0 9px 0 5px;
    font-size: 14.5px;
}

.panel-head span {
    margin-right: auto;
}

.panel-stats .panel-head {
    height: 26px;
}

.pbtn {
    width: 15px;
    height: 15px;
}

.panel-tools {
    display: flex;
    align-items: center;
    gap: 9.5px;
    height: 34px;
    padding: 0 0 0 10px;
}

.tools-layers {
    height: 37px;
}

.pic {
    width: 22px;
    height: 22px;
    flex: none;
}

.box {
    display: flex;
    width: 366px;
    margin-left: 1px;
    background: #fff;
    border: 1px solid #bdbdbd;
    overflow: hidden;
}

.tree-box {
    height: 207px;
    margin-top: 2px;
}

.handle {
    height: 6px;
    background: radial-gradient(circle, #aaa 0.6px, transparent 1px) center / 4px 3px repeat-x;
    background-size: 4px 3px;
    margin: 0 170px;
}

/* browser tree */
.tree {
    flex: 1;
    padding-top: 1px;
    overflow: hidden;
    font-size: 14px;
}

.row {
    position: relative;
    height: 22.5px;
    line-height: 22.5px;
}

.row.selected {
    width: 264px;
    background: #efefef;
}

.row span {
    position: absolute;
    left: 51px;
}

.row:nth-child(6) span { left: 71px; }
.row:nth-child(7) span { left: 91px; }
.row:nth-child(8) span,
.row:nth-child(9) span { left: 111px; }

.arr-r, .arr-d {
    position: absolute;
    top: 6px;
    width: 0;
    height: 0;
}

.arr-r {
    border-left: 5px solid #555;
    border-top: 5px solid transparent;
    border-bottom: 5px solid transparent;
}

.arr-d {
    top: 8px;
    border-top: 5px solid #555;
    border-left: 5px solid transparent;
    border-right: 5px solid transparent;
}

.l0 { left: 6px; }
.l1 { left: 25px; }
.l2 { left: 45px; }
.l3 { left: 66px; }

.t-ic {
    position: absolute;
    top: 1px;
    width: 20px;
    height: 20px;
}

.l0i { left: 24px; }
.l1i { left: 46px; }
.l2i { left: 65px; }
.l3i { left: 85px; }

/* scrollbars */
.sb {
    display: flex;
    flex-direction: column;
    width: 18px;
    height: 100%;
    flex: none;
    background: #fff;
    border-left: 1px solid #f0f0f0;
}

.sb-up, .sb-down {
    position: relative;
    display: block;
    height: 16px;
    flex: none;
    background: #f5f5f5;
}

.sb-up::after, .sb-down::after {
    content: "";
    position: absolute;
    left: 4px;
    top: 5px;
    border-left: 4.5px solid transparent;
    border-right: 4.5px solid transparent;
}

.sb-up::after { border-bottom: 5px solid #444; }
.sb-down::after { border-top: 5px solid #444; }

.sb .thumb {
    flex: none;
    background: #e6e6e6;
    border: 1px solid #cfcfcf;
}

.sb-browser .sb-nub { height: 7px; margin-top: 2px; background: #e6e6e6; border: 1px solid #dcdcdc; }
.sb-browser .thumb { height: 130px; margin-top: 32px; margin-bottom: 2px; }
.sb-layers .thumb { height: 40px; margin-top: 78px; }
.sb-layers .sb-down { margin-top: auto; }
.sb-stats .thumb { height: 128px; margin-top: 44px; }
.sb-stats .sb-down { margin-top: auto; }

/* layer tree */
.layers-box {
    height: 153px;
}

.layers {
    flex: 1;
    overflow: hidden;
    font-size: 15.2px;
}

.lrow {
    display: flex;
    align-items: center;
    height: 22.6px;
    padding-left: 28px;
    flex: none;
}

.lrow.current {
    background: #f0f0f0;
}

.ck {
    width: 16px;
    height: 16px;
    background: #fff;
    border: 1px solid #bbb;
    position: relative;
}

.ck.on::after {
    content: "";
    position: absolute;
    left: 4px;
    top: 1px;
    width: 5px;
    height: 10px;
    border: solid #111;
    border-width: 0 2px 2px 0;
    transform: rotate(38deg);
}

.sym {
    width: 20px;
    margin: 0 8px 0 9px;
    flex: none;
}

.dot {
    width: 11px;
    height: 11px;
    margin: 0 13px 0 13.5px;
    border-radius: 50%;
    border: 1px solid #555;
}

.brown { background: #a3705a; }
.tan { background: #bfb396; }

.ln {
    height: 2px;
}

.green { background: #d6dea0; }
.pink { background: #f5c6d0; }

.sq {
    height: 20px;
    border: 1px solid #4a3a34;
}

.red { background: #b9464e; }
.brownsq { background: #a3705a; }
.pinksq { background: #f2a5b5; }

.lname {
    color: #7a7a7a;
    font-style: italic;
    font-weight: 600;
    white-space: nowrap;
}

.lname.on {
    color: #000;
    font-size: 14.3px;
    font-style: normal;
    font-weight: 700;
}

.active-layer {
    text-decoration: underline;
}

.hbtn {
    width: 21px;
    height: 21px;
    margin-left: auto;
    margin-right: 6px;
    flex: none;
    background: #f5f5f5;
    border: 1px solid #e2e2e2;
    border-radius: 3px;
}

.hbtn.after-mem {
    margin-left: 1px;
}

.hbtn.mem {
    margin-right: 0;
}

/* statistics */
.combo {
    display: flex;
    align-items: center;
    background: linear-gradient(#fafafa, #f0f0f0);
    border: 1px solid #bbb;
    border-radius: 3px;
    font-size: 12px;
}

.combo-layer {
    width: 367px;
    height: 29px;
    margin-left: 0;
    padding: 0 10px;
}

.combo-layer .dd {
    margin-left: auto;
}

.c-ic {
    width: 16px;
    height: 16px;
    margin-right: 9px;
}

.field-row {
    display: flex;
    align-items: stretch;
    height: 28px;
    margin-top: 5px;
}

.combo-field {
    width: 329px;
    padding-left: 5px;
    background: #fff;
}

.num-tag {
    margin-right: 8px;
    font-size: 11.5px;
    font-weight: 700;
    color: #444;
}

.combo-arrow {
    display: flex;
    align-items: center;
    justify-content: center;
    width: 25px;
    height: 100%;
    margin-left: auto;
    background: #ededed;
}

.eps-btn {
    display: flex;
    align-items: center;
    justify-content: center;
    width: 29px;
    margin-left: 9px;
    background: #f3f3f3;
    border: 1px solid #bbb;
    border-radius: 3px;
    font-family: "Liberation Serif", serif;
    font-size: 24px;
    color: #5d2a6e;
}

.stats-box {
    height: 208px;
    margin-top: 5px;
}

.stats-wrap {
    flex: 1;
    overflow: hidden;
    background: linear-gradient(#efefef 25px, #fff 25px);
}

.stats {
    width: 296px;
    table-layout: fixed;
    border-collapse: collapse;
    font-size: 14px;
}

.stats th {
    height: 25px;
    padding: 0;
    font-weight: 400;
    background: linear-gradient(#fcfcfc, #eee);
    border-bottom: 1px solid #c9c9c9;
    border-right: 1px solid #c9c9c9;
}

.col-a { width: 232px; }
.col-b { width: 64px; }

.stats th.col-b {
    font-weight: 700;
    text-align: left;
    padding-left: 4px;
}

.stats td {
    height: 37.5px;
    padding-left: 4px;
    background: #fff;
    border-right: 1px solid #c9c9c9;
    border-bottom: 1px solid #c9c9c9;
    white-space: nowrap;
    overflow: hidden;
}

.stats .alt td {
    background: #e8e6e3;
}

.stats td.picked {
    background: #0f7fdc;
    color: #fff;
}

.selected-row {
    display: flex;
    align-items: center;
    height: 33px;
    padding-top: 5px;
    font-size: 11.8px;
}

.ck-stats {
    margin-left: 1px;
}

.sel-label {
    margin-left: 7px;
    margin-right: auto;
}

.copy-ic {
    width: 18px;
    height: 18px;
    margin-right: 16px;
}

.refresh-ic {
    width: 20px;
    height: 20px;
    margin-right: 8px;
}

.more-btn {
    display: flex;
    align-items: flex-end;
    justify-content: center;
    width: 28px;
    height: 24px;
    margin-right: 8px;
    padding-bottom: 4px;
    background: #f5f5f5;
    border: 1px solid #bbb;
    border-radius: 3px;
    font-size: 12px;
    line-height: 1;
}

/* map side */
.canvas {
    display: flex;
    flex-direction: column;
    flex: 1;
    min-width: 0;
    background: #fff;
    padding-top: 1px;
    background-clip: content-box;
}

.msgbar {
    display: flex;
    align-items: center;
    height: 34px;
    flex: none;
    padding: 0 11px 0 9px;
    background: #dfefd8;
    border: 1px solid #bccdb4;
    border-bottom: 2px solid #a9b9a0;
    font-size: 11.8px;
}

.msg-ok {
    width: 32px;
    height: 28px;
    margin-right: 13px;
}

.msg-text {
    margin-top: 5px;
}

.msg-text b {
    font-size: 12.6px;
}

.msg-text a {
    color: #157a15;
}

.msg-more {
    margin-left: auto;
    margin-right: 26px;
    font-size: 12px;
}

.msg-close {
    width: 22px;
    height: 22px;
}

.map {
    display: block;
    flex: 1;
    min-height: 0;
    width: 100%;
}

.land {
    fill: #a3705a;
    stroke: #211e1c;
    stroke-width: 1.4px;
    stroke-linejoin: round;
    vector-effect: non-scaling-stroke;
}

.border {
    fill: none;
    stroke: #211e1c;
    stroke-width: 1.4px;
    stroke-linejoin: round;
    vector-effect: non-scaling-stroke;
}

.east-clear {
    stroke: #fff;
    stroke-width: 4px;
}

.east-fill {
    stroke: #a3705a;
    stroke-width: 4px;
}

.shore {
    fill: none;
    stroke: #1f1c1a;
    stroke-width: 2.2px;
    stroke-linejoin: round;
}

.jag {
    fill: none;
    stroke: #1f1c1a;
    stroke-width: 1.8px;
    stroke-linejoin: round;
    vector-effect: non-scaling-stroke;
}

.speck {
    fill: none;
    stroke: #1f1c1a;
    stroke-width: 2.2px;
    stroke-dasharray: 2.5 1.5;
    vector-effect: non-scaling-stroke;
}

.gap {
    fill: #fff;
    stroke: #2e2a28;
    stroke-width: 1px;
    vector-effect: non-scaling-stroke;
}

.airports circle,
.military circle {
    r: 5px;
    stroke-width: 1px;
}

.airports circle {
    fill: #c5b99c;
    stroke: #5e5e50;
}

.military circle {
    fill: #a3705a;
    stroke: #332c28;
}

/* status bar */
.statusbar {
    display: flex;
    align-items: center;
    height: 35px;
    flex: none;
    background: #f0f0f0;
    border-top: 1px solid #aaa;
    font-size: 13px;
}

.searchbox {
    display: flex;
    align-items: center;
    width: 250px;
    height: 27px;
    margin-left: 5px;
    padding-left: 11px;
    background: #fff;
    border: 1px solid #bbb;
    border-radius: 3px;
    color: #808080;
    font-size: 12.5px;
}

.search-ic {
    width: 16px;
    height: 16px;
    margin-right: 8px;
}

.st {
    flex: none;
    white-space: nowrap;
}

.st-input {
    position: relative;
    display: flex;
    align-items: center;
    height: 27px;
    flex: none;
    background: #fff;
    border: 1px solid #bbb;
    border-radius: 3px;
    padding-left: 4px;
}

.st-ic { flex: none; }

.st-coordl { width: 78px; margin-left: 683px; }
.st-coord { width: 87px; margin-left: 5px; justify-content: center; }
.st-track { width: 20px; height: 26px; margin-left: 5px; }
.st-scalel { width: 32px; margin-left: 18px; }
.st-scale { width: 95px; margin-left: 4px; padding-left: 1px; overflow: hidden; }
.scale-val { width: 68px; overflow: hidden; white-space: nowrap; }
.scale-dd { display: flex; align-items: center; justify-content: center; width: 25px; height: 100%; margin-left: auto; background: #f3f3f3; border-left: 1px solid #ccc; }
.st-lock { width: 16px; height: 22px; margin-left: 15px; }
.st-magl { width: 79px; margin-left: 11px; }
.st-mag { width: 101px; margin-left: 5px; }
.st-rotl { width: 35px; margin-left: 12px; }
.st-rot { width: 99px; margin-left: 11px; }
.st-ck { margin-left: 10px; }
.st-render { width: 55px; margin-left: 7px; }
.st-globe { width: 18px; height: 18px; margin-left: 19px; }
.st-epsg { width: 65px; margin-left: 5px; }
.st-msg { width: 22px; height: 26px; margin-left: 30px; }

.spin {
    display: flex;
    flex-direction: column;
    gap: 3px;
    margin-left: auto;
    margin-right: 4px;
}

.spin b {
    display: block;
    border-left: 5px solid transparent;
    border-right: 5px solid transparent;
    border-bottom: 6px solid #777;
}

.spin b + b {
    border-bottom: 0;
    border-top: 6px solid #777;
}

/* text inside icons */
.svg-a { font: 14px "Noto Sans", sans-serif; fill: #555; }
.svg-11 { font: bold 8px "Noto Sans", sans-serif; fill: #555; text-anchor: middle; }
.svg-i { font: italic bold 18px "Liberation Serif", serif; fill: #fff; text-anchor: middle; }
.svg-abc { font: bold 11px "Noto Sans", sans-serif; fill: #222; }
.svg-abd { font: bold 11px "Noto Sans", sans-serif; fill: #222; }
.svg-abr { font: bold 11px "Noto Sans", sans-serif; fill: #e01f1f; }
.svg-abo { font: bold 10px "Noto Sans", sans-serif; fill: #aaa; }
.svg-q { font: bold 16px "Noto Sans", sans-serif; fill: #fff; text-anchor: middle; }
.svg-pi { font: italic bold 15px "Liberation Serif", serif; fill: #fff; text-anchor: middle; }
.svg-eps { font: 20px "Liberation Serif", serif; fill: #5d2a6e; }
.svg-help { font: bold 15px "Noto Sans", sans-serif; fill: #444; text-anchor: middle; }
```
